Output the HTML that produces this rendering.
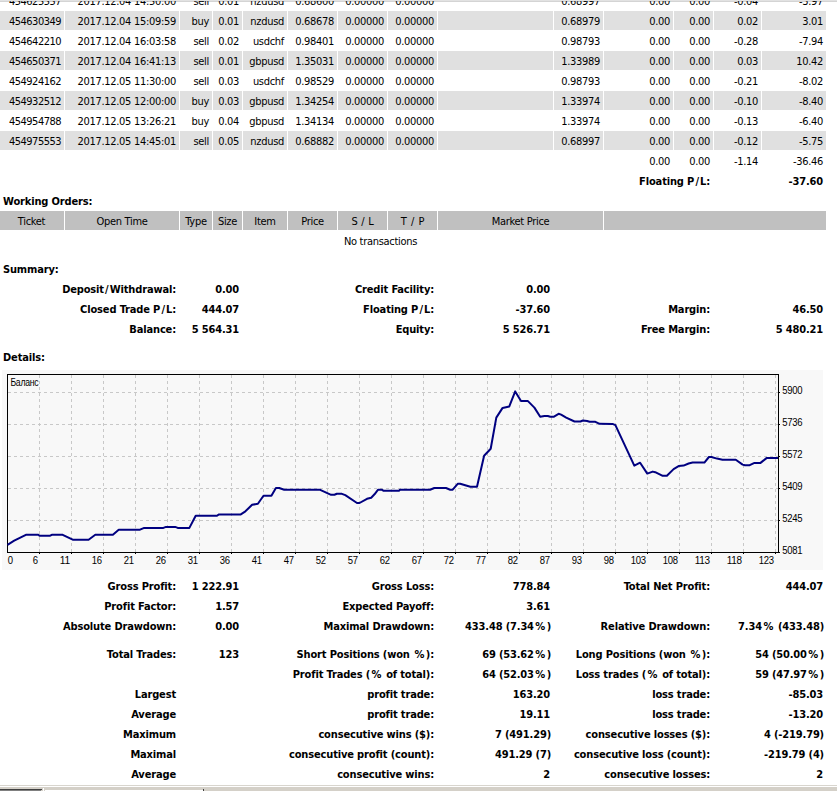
<!DOCTYPE html>
<html><head><meta charset="utf-8"><title>Statement</title>
<style>
html,body{margin:0;padding:0;background:#fff;overflow:hidden;}
#pg{position:relative;width:837px;height:791px;overflow:hidden;background:#fff;font-family:"DejaVu Sans Condensed","Liberation Sans",sans-serif;font-size:11px;line-height:13px;color:#000;letter-spacing:-0.3px;}
#pg div,#pg span{position:absolute;white-space:nowrap;}
.b{font-weight:bold;letter-spacing:-0.15px;}
i{font-style:normal}.t{letter-spacing:-0.52px}.w{word-spacing:1px}.w2{word-spacing:1.7px}.p{padding:0 1.5px}.s{padding:0 1.2px}
.g{background:#e0e0e0;height:19px;}
.h{background:#c0c0c0;height:19px;text-align:center;}
</style></head><body>
<div id="pg">
<div style="left:0;top:1px;width:837px;height:1px;background:#d4d4d4"></div>
<span style="right:776px;top:-5px"><i class="t">454625557</i></span><span style="right:661px;top:-5px">2017.12.04 14:50:00</span><span style="right:628px;top:-5px">sell</span><span style="right:598px;top:-5px">0.01</span><span style="right:553px;top:-5px">nzdusd</span><span style="right:503px;top:-5px">0.68600</span><span style="right:453px;top:-5px">0.00000</span><span style="right:403px;top:-5px">0.00000</span><span style="right:237px;top:-5px">0.68997</span><span style="right:167px;top:-5px">0.00</span><span style="right:127px;top:-5px">0.00</span><span style="right:79px;top:-5px">-0.04</span><span style="right:14px;top:-5px">-3.97</span>
<div class="g" style="left:-1px;top:11px;width:65px"></div><div class="g" style="left:65px;top:11px;width:114px"></div><div class="g" style="left:180px;top:11px;width:32px"></div><div class="g" style="left:213px;top:11px;width:29px"></div><div class="g" style="left:243px;top:11px;width:44px"></div><div class="g" style="left:288px;top:11px;width:49px"></div><div class="g" style="left:338px;top:11px;width:49px"></div><div class="g" style="left:388px;top:11px;width:49px"></div><div class="g" style="left:438px;top:11px;width:115px"></div><div class="g" style="left:554px;top:11px;width:49px"></div><div class="g" style="left:604px;top:11px;width:69px"></div><div class="g" style="left:674px;top:11px;width:39px"></div><div class="g" style="left:714px;top:11px;width:47px"></div><div class="g" style="left:762px;top:11px;width:64px"></div><span style="right:776px;top:15px"><i class="t">454630349</i></span><span style="right:661px;top:15px">2017.12.04 15:09:59</span><span style="right:628px;top:15px">buy</span><span style="right:598px;top:15px">0.01</span><span style="right:553px;top:15px">nzdusd</span><span style="right:503px;top:15px">0.68678</span><span style="right:453px;top:15px">0.00000</span><span style="right:403px;top:15px">0.00000</span><span style="right:237px;top:15px">0.68979</span><span style="right:167px;top:15px">0.00</span><span style="right:127px;top:15px">0.00</span><span style="right:79px;top:15px">0.02</span><span style="right:14px;top:15px">3.01</span>
<span style="right:776px;top:35px"><i class="t">454642210</i></span><span style="right:661px;top:35px">2017.12.04 16:03:58</span><span style="right:628px;top:35px">sell</span><span style="right:598px;top:35px">0.02</span><span style="right:553px;top:35px">usdchf</span><span style="right:503px;top:35px">0.98401</span><span style="right:453px;top:35px">0.00000</span><span style="right:403px;top:35px">0.00000</span><span style="right:237px;top:35px">0.98793</span><span style="right:167px;top:35px">0.00</span><span style="right:127px;top:35px">0.00</span><span style="right:79px;top:35px">-0.28</span><span style="right:14px;top:35px">-7.94</span>
<div class="g" style="left:-1px;top:51px;width:65px"></div><div class="g" style="left:65px;top:51px;width:114px"></div><div class="g" style="left:180px;top:51px;width:32px"></div><div class="g" style="left:213px;top:51px;width:29px"></div><div class="g" style="left:243px;top:51px;width:44px"></div><div class="g" style="left:288px;top:51px;width:49px"></div><div class="g" style="left:338px;top:51px;width:49px"></div><div class="g" style="left:388px;top:51px;width:49px"></div><div class="g" style="left:438px;top:51px;width:115px"></div><div class="g" style="left:554px;top:51px;width:49px"></div><div class="g" style="left:604px;top:51px;width:69px"></div><div class="g" style="left:674px;top:51px;width:39px"></div><div class="g" style="left:714px;top:51px;width:47px"></div><div class="g" style="left:762px;top:51px;width:64px"></div><span style="right:776px;top:55px"><i class="t">454650371</i></span><span style="right:661px;top:55px">2017.12.04 16:41:13</span><span style="right:628px;top:55px">sell</span><span style="right:598px;top:55px">0.01</span><span style="right:553px;top:55px">gbpusd</span><span style="right:503px;top:55px">1.35031</span><span style="right:453px;top:55px">0.00000</span><span style="right:403px;top:55px">0.00000</span><span style="right:237px;top:55px">1.33989</span><span style="right:167px;top:55px">0.00</span><span style="right:127px;top:55px">0.00</span><span style="right:79px;top:55px">0.03</span><span style="right:14px;top:55px">10.42</span>
<span style="right:776px;top:75px"><i class="t">454924162</i></span><span style="right:661px;top:75px">2017.12.05 11:30:00</span><span style="right:628px;top:75px">sell</span><span style="right:598px;top:75px">0.03</span><span style="right:553px;top:75px">usdchf</span><span style="right:503px;top:75px">0.98529</span><span style="right:453px;top:75px">0.00000</span><span style="right:403px;top:75px">0.00000</span><span style="right:237px;top:75px">0.98793</span><span style="right:167px;top:75px">0.00</span><span style="right:127px;top:75px">0.00</span><span style="right:79px;top:75px">-0.21</span><span style="right:14px;top:75px">-8.02</span>
<div class="g" style="left:-1px;top:91px;width:65px"></div><div class="g" style="left:65px;top:91px;width:114px"></div><div class="g" style="left:180px;top:91px;width:32px"></div><div class="g" style="left:213px;top:91px;width:29px"></div><div class="g" style="left:243px;top:91px;width:44px"></div><div class="g" style="left:288px;top:91px;width:49px"></div><div class="g" style="left:338px;top:91px;width:49px"></div><div class="g" style="left:388px;top:91px;width:49px"></div><div class="g" style="left:438px;top:91px;width:115px"></div><div class="g" style="left:554px;top:91px;width:49px"></div><div class="g" style="left:604px;top:91px;width:69px"></div><div class="g" style="left:674px;top:91px;width:39px"></div><div class="g" style="left:714px;top:91px;width:47px"></div><div class="g" style="left:762px;top:91px;width:64px"></div><span style="right:776px;top:95px"><i class="t">454932512</i></span><span style="right:661px;top:95px">2017.12.05 12:00:00</span><span style="right:628px;top:95px">buy</span><span style="right:598px;top:95px">0.03</span><span style="right:553px;top:95px">gbpusd</span><span style="right:503px;top:95px">1.34254</span><span style="right:453px;top:95px">0.00000</span><span style="right:403px;top:95px">0.00000</span><span style="right:237px;top:95px">1.33974</span><span style="right:167px;top:95px">0.00</span><span style="right:127px;top:95px">0.00</span><span style="right:79px;top:95px">-0.10</span><span style="right:14px;top:95px">-8.40</span>
<span style="right:776px;top:115px"><i class="t">454954788</i></span><span style="right:661px;top:115px">2017.12.05 13:26:21</span><span style="right:628px;top:115px">buy</span><span style="right:598px;top:115px">0.04</span><span style="right:553px;top:115px">gbpusd</span><span style="right:503px;top:115px">1.34134</span><span style="right:453px;top:115px">0.00000</span><span style="right:403px;top:115px">0.00000</span><span style="right:237px;top:115px">1.33974</span><span style="right:167px;top:115px">0.00</span><span style="right:127px;top:115px">0.00</span><span style="right:79px;top:115px">-0.13</span><span style="right:14px;top:115px">-6.40</span>
<div class="g" style="left:-1px;top:131px;width:65px"></div><div class="g" style="left:65px;top:131px;width:114px"></div><div class="g" style="left:180px;top:131px;width:32px"></div><div class="g" style="left:213px;top:131px;width:29px"></div><div class="g" style="left:243px;top:131px;width:44px"></div><div class="g" style="left:288px;top:131px;width:49px"></div><div class="g" style="left:338px;top:131px;width:49px"></div><div class="g" style="left:388px;top:131px;width:49px"></div><div class="g" style="left:438px;top:131px;width:115px"></div><div class="g" style="left:554px;top:131px;width:49px"></div><div class="g" style="left:604px;top:131px;width:69px"></div><div class="g" style="left:674px;top:131px;width:39px"></div><div class="g" style="left:714px;top:131px;width:47px"></div><div class="g" style="left:762px;top:131px;width:64px"></div><span style="right:776px;top:135px"><i class="t">454975553</i></span><span style="right:661px;top:135px">2017.12.05 14:45:01</span><span style="right:628px;top:135px">sell</span><span style="right:598px;top:135px">0.05</span><span style="right:553px;top:135px">nzdusd</span><span style="right:503px;top:135px">0.68882</span><span style="right:453px;top:135px">0.00000</span><span style="right:403px;top:135px">0.00000</span><span style="right:237px;top:135px">0.68997</span><span style="right:167px;top:135px">0.00</span><span style="right:127px;top:135px">0.00</span><span style="right:79px;top:135px">-0.12</span><span style="right:14px;top:135px">-5.75</span>
<span style="right:167px;top:155px">0.00</span><span style="right:127px;top:155px">0.00</span><span style="right:79px;top:155px">-1.14</span><span style="right:14px;top:155px">-36.46</span>
<div style="left:0;top:0;width:837px;height:1px;background:#e2e2e2"></div>
<span class="b" style="right:127px;top:175px">Floating P<i class="s">/</i>L:</span><span class="b" style="right:14px;top:175px">-37.60</span>
<span class="b" style="left:3px;top:195px">Working Orders:</span>
<div class="h" style="left:-1px;top:211px;width:65px"><span style="position:static;line-height:21px">Ticket</span></div><div class="h" style="left:65px;top:211px;width:114px"><span style="position:static;line-height:21px">Open Time</span></div><div class="h" style="left:180px;top:211px;width:32px"><span style="position:static;line-height:21px">Type</span></div><div class="h" style="left:213px;top:211px;width:29px"><span style="position:static;line-height:21px">Size</span></div><div class="h" style="left:243px;top:211px;width:44px"><span style="position:static;line-height:21px">Item</span></div><div class="h" style="left:288px;top:211px;width:49px"><span style="position:static;line-height:21px">Price</span></div><div class="h" style="left:338px;top:211px;width:49px"><span style="position:static;line-height:21px"><i class=w>S / L</i></span></div><div class="h" style="left:388px;top:211px;width:49px"><span style="position:static;line-height:21px"><i class=w2>T / P</i></span></div><div class="h" style="left:438px;top:211px;width:165px"><span style="position:static;line-height:21px">Market Price</span></div><div class="h" style="left:604px;top:211px;width:222px"><span style="position:static;line-height:21px"></span></div>
<span style="left:180.5px;top:235px;width:400px;text-align:center">No transactions</span>
<span class="b" style="left:3px;top:263px">Summary:</span>
<span class="b" style="right:661px;top:283px">Deposit<i class="s">/</i>Withdrawal:</span><span class="b" style="right:598px;top:283px">0.00</span><span class="b" style="right:403px;top:283px">Credit Facility:</span><span class="b" style="right:287px;top:283px">0.00</span>
<span class="b" style="right:661px;top:303px">Closed Trade P<i class="s">/</i>L:</span><span class="b" style="right:598px;top:303px">444.07</span><span class="b" style="right:403px;top:303px">Floating P<i class="s">/</i>L:</span><span class="b" style="right:287px;top:303px">-37.60</span><span class="b" style="right:127px;top:303px">Margin:</span><span class="b" style="right:14px;top:303px">46.50</span>
<span class="b" style="right:661px;top:323px">Balance:</span><span class="b" style="right:598px;top:323px">5 564.31</span><span class="b" style="right:403px;top:323px">Equity:</span><span class="b" style="right:287px;top:323px">5 526.71</span><span class="b" style="right:127px;top:323px">Free Margin:</span><span class="b" style="right:14px;top:323px">5 480.21</span>
<span class="b" style="left:3px;top:351px">Details:</span>
<svg width="821" height="200" viewBox="0 0 821 200" style="position:absolute;left:2px;top:370px" font-family="'Liberation Sans',sans-serif" font-size="10px" shape-rendering="crispEdges">
<rect x="0" y="0" width="821" height="200" fill="#f8f8f8"/>
<line x1="37.5" y1="5" x2="37.5" y2="182" stroke="#c8c8c8" stroke-width="1" stroke-dasharray="3 3"/>
<line x1="69.5" y1="5" x2="69.5" y2="182" stroke="#c8c8c8" stroke-width="1" stroke-dasharray="3 3"/>
<line x1="101.5" y1="5" x2="101.5" y2="182" stroke="#c8c8c8" stroke-width="1" stroke-dasharray="3 3"/>
<line x1="133.5" y1="5" x2="133.5" y2="182" stroke="#c8c8c8" stroke-width="1" stroke-dasharray="3 3"/>
<line x1="165.5" y1="5" x2="165.5" y2="182" stroke="#c8c8c8" stroke-width="1" stroke-dasharray="3 3"/>
<line x1="197.5" y1="5" x2="197.5" y2="182" stroke="#c8c8c8" stroke-width="1" stroke-dasharray="3 3"/>
<line x1="229.5" y1="5" x2="229.5" y2="182" stroke="#c8c8c8" stroke-width="1" stroke-dasharray="3 3"/>
<line x1="261.5" y1="5" x2="261.5" y2="182" stroke="#c8c8c8" stroke-width="1" stroke-dasharray="3 3"/>
<line x1="293.5" y1="5" x2="293.5" y2="182" stroke="#c8c8c8" stroke-width="1" stroke-dasharray="3 3"/>
<line x1="325.5" y1="5" x2="325.5" y2="182" stroke="#c8c8c8" stroke-width="1" stroke-dasharray="3 3"/>
<line x1="357.5" y1="5" x2="357.5" y2="182" stroke="#c8c8c8" stroke-width="1" stroke-dasharray="3 3"/>
<line x1="389.5" y1="5" x2="389.5" y2="182" stroke="#c8c8c8" stroke-width="1" stroke-dasharray="3 3"/>
<line x1="421.5" y1="5" x2="421.5" y2="182" stroke="#c8c8c8" stroke-width="1" stroke-dasharray="3 3"/>
<line x1="453.5" y1="5" x2="453.5" y2="182" stroke="#c8c8c8" stroke-width="1" stroke-dasharray="3 3"/>
<line x1="485.5" y1="5" x2="485.5" y2="182" stroke="#c8c8c8" stroke-width="1" stroke-dasharray="3 3"/>
<line x1="517.5" y1="5" x2="517.5" y2="182" stroke="#c8c8c8" stroke-width="1" stroke-dasharray="3 3"/>
<line x1="549.5" y1="5" x2="549.5" y2="182" stroke="#c8c8c8" stroke-width="1" stroke-dasharray="3 3"/>
<line x1="581.5" y1="5" x2="581.5" y2="182" stroke="#c8c8c8" stroke-width="1" stroke-dasharray="3 3"/>
<line x1="613.5" y1="5" x2="613.5" y2="182" stroke="#c8c8c8" stroke-width="1" stroke-dasharray="3 3"/>
<line x1="645.5" y1="5" x2="645.5" y2="182" stroke="#c8c8c8" stroke-width="1" stroke-dasharray="3 3"/>
<line x1="677.5" y1="5" x2="677.5" y2="182" stroke="#c8c8c8" stroke-width="1" stroke-dasharray="3 3"/>
<line x1="709.5" y1="5" x2="709.5" y2="182" stroke="#c8c8c8" stroke-width="1" stroke-dasharray="3 3"/>
<line x1="741.5" y1="5" x2="741.5" y2="182" stroke="#c8c8c8" stroke-width="1" stroke-dasharray="3 3"/>
<line x1="773.5" y1="5" x2="773.5" y2="182" stroke="#c8c8c8" stroke-width="1" stroke-dasharray="3 3"/>
<line x1="6" y1="22.5" x2="776" y2="22.5" stroke="#c8c8c8" stroke-width="1" stroke-dasharray="3 3"/>
<line x1="6" y1="54.5" x2="776" y2="54.5" stroke="#c8c8c8" stroke-width="1" stroke-dasharray="3 3"/>
<line x1="6" y1="86.5" x2="776" y2="86.5" stroke="#c8c8c8" stroke-width="1" stroke-dasharray="3 3"/>
<line x1="6" y1="118.5" x2="776" y2="118.5" stroke="#c8c8c8" stroke-width="1" stroke-dasharray="3 3"/>
<line x1="6" y1="150.5" x2="776" y2="150.5" stroke="#c8c8c8" stroke-width="1" stroke-dasharray="3 3"/>
<rect x="5.5" y="4.5" width="771" height="178" fill="none" stroke="#000" stroke-width="1"/>
<line x1="37.5" y1="183" x2="37.5" y2="184" stroke="#000"/>
<line x1="69.5" y1="183" x2="69.5" y2="184" stroke="#000"/>
<line x1="101.5" y1="183" x2="101.5" y2="184" stroke="#000"/>
<line x1="133.5" y1="183" x2="133.5" y2="184" stroke="#000"/>
<line x1="165.5" y1="183" x2="165.5" y2="184" stroke="#000"/>
<line x1="197.5" y1="183" x2="197.5" y2="184" stroke="#000"/>
<line x1="229.5" y1="183" x2="229.5" y2="184" stroke="#000"/>
<line x1="261.5" y1="183" x2="261.5" y2="184" stroke="#000"/>
<line x1="293.5" y1="183" x2="293.5" y2="184" stroke="#000"/>
<line x1="325.5" y1="183" x2="325.5" y2="184" stroke="#000"/>
<line x1="357.5" y1="183" x2="357.5" y2="184" stroke="#000"/>
<line x1="389.5" y1="183" x2="389.5" y2="184" stroke="#000"/>
<line x1="421.5" y1="183" x2="421.5" y2="184" stroke="#000"/>
<line x1="453.5" y1="183" x2="453.5" y2="184" stroke="#000"/>
<line x1="485.5" y1="183" x2="485.5" y2="184" stroke="#000"/>
<line x1="517.5" y1="183" x2="517.5" y2="184" stroke="#000"/>
<line x1="549.5" y1="183" x2="549.5" y2="184" stroke="#000"/>
<line x1="581.5" y1="183" x2="581.5" y2="184" stroke="#000"/>
<line x1="613.5" y1="183" x2="613.5" y2="184" stroke="#000"/>
<line x1="645.5" y1="183" x2="645.5" y2="184" stroke="#000"/>
<line x1="677.5" y1="183" x2="677.5" y2="184" stroke="#000"/>
<line x1="709.5" y1="183" x2="709.5" y2="184" stroke="#000"/>
<line x1="741.5" y1="183" x2="741.5" y2="184" stroke="#000"/>
<line x1="773.5" y1="183" x2="773.5" y2="184" stroke="#000"/>
<line x1="777" y1="22.5" x2="778" y2="22.5" stroke="#000"/>
<line x1="777" y1="54.5" x2="778" y2="54.5" stroke="#000"/>
<line x1="777" y1="86.5" x2="778" y2="86.5" stroke="#000"/>
<line x1="777" y1="118.5" x2="778" y2="118.5" stroke="#000"/>
<line x1="777" y1="150.5" x2="778" y2="150.5" stroke="#000"/>
<line x1="777" y1="182.5" x2="778" y2="182.5" stroke="#000"/>
<polyline fill="none" stroke="#000080" stroke-width="2" stroke-linejoin="round" shape-rendering="geometricPrecision" points="5.5,174.8 12.2,170.7 23.9,164.8 36.5,164.8 37.3,165.7 48.2,165.7 49.8,164.8 60.7,164.8 70.7,169.7 86.6,169.7 93.3,164.8 110.9,164.8 116.7,159.8 138.0,159.7 142.2,157.9 161.4,157.9 164.0,156.9 173.2,156.9 175.7,157.9 187.4,157.9 193.7,145.7 215.0,145.7 216.6,144.6 238.4,144.6 243.4,141.3 250.1,134.8 255.9,133.8 261.5,125.8 269.4,125.7 273.9,118.0 277.2,118.0 282.2,119.8 318.2,119.8 329.1,124.8 332.4,124.8 334.9,123.8 339.9,123.8 343.3,125.2 355.0,133.0 357.5,133.0 365.0,128.8 369.2,127.7 372.5,124.3 375.9,119.8 380.1,119.8 381.7,120.8 397.2,120.7 398.0,119.7 428.1,119.7 432.3,118.0 444.0,118.0 448.2,119.7 450.7,119.7 455.7,113.8 458.2,113.8 468.3,116.8 475.0,116.8 482.1,85.8 488.7,78.8 494.3,47.6 500.6,37.9 507.3,36.4 513.2,21.4 519.0,30.9 525.7,30.9 532.4,37.6 538.2,46.8 542.4,46.0 545.8,46.0 548.3,46.8 551.6,46.8 556.6,43.8 559.1,44.6 564.2,47.6 572.5,51.5 578.4,51.5 580.9,50.5 585.1,51.0 587.6,51.8 593.4,51.8 597.6,53.8 610.5,53.9 613.4,55.1 632.3,95.6 638.1,92.7 645.3,103.6 650.7,101.6 653.2,102.2 660.7,105.8 664.9,105.8 671.6,99.1 676.6,96.1 681.6,95.6 686.6,93.5 690.6,92.6 702.4,92.6 706.9,87.0 709.4,87.0 715.0,88.6 720.5,89.8 733.8,89.8 740.6,94.6 743.0,95.2 747.7,95.2 752.5,92.9 758.5,92.9 764.5,88.1 776.0,88.1"/>
<text x="5.7" y="194" textLength="5" lengthAdjust="spacingAndGlyphs">0</text>
<text x="30.8" y="194" textLength="5" lengthAdjust="spacingAndGlyphs">6</text>
<text x="57.8" y="194" textLength="10" lengthAdjust="spacingAndGlyphs">11</text>
<text x="89.8" y="194" textLength="10" lengthAdjust="spacingAndGlyphs">16</text>
<text x="121.8" y="194" textLength="10" lengthAdjust="spacingAndGlyphs">21</text>
<text x="153.8" y="194" textLength="10" lengthAdjust="spacingAndGlyphs">26</text>
<text x="185.8" y="194" textLength="10" lengthAdjust="spacingAndGlyphs">31</text>
<text x="217.8" y="194" textLength="10" lengthAdjust="spacingAndGlyphs">36</text>
<text x="249.8" y="194" textLength="10" lengthAdjust="spacingAndGlyphs">41</text>
<text x="281.8" y="194" textLength="10" lengthAdjust="spacingAndGlyphs">47</text>
<text x="313.8" y="194" textLength="10" lengthAdjust="spacingAndGlyphs">52</text>
<text x="345.8" y="194" textLength="10" lengthAdjust="spacingAndGlyphs">57</text>
<text x="377.8" y="194" textLength="10" lengthAdjust="spacingAndGlyphs">62</text>
<text x="409.8" y="194" textLength="10" lengthAdjust="spacingAndGlyphs">67</text>
<text x="441.8" y="194" textLength="10" lengthAdjust="spacingAndGlyphs">72</text>
<text x="473.8" y="194" textLength="10" lengthAdjust="spacingAndGlyphs">77</text>
<text x="505.8" y="194" textLength="10" lengthAdjust="spacingAndGlyphs">82</text>
<text x="537.8" y="194" textLength="10" lengthAdjust="spacingAndGlyphs">87</text>
<text x="569.8" y="194" textLength="10" lengthAdjust="spacingAndGlyphs">93</text>
<text x="601.8" y="194" textLength="10" lengthAdjust="spacingAndGlyphs">98</text>
<text x="628.8" y="194" textLength="15" lengthAdjust="spacingAndGlyphs">103</text>
<text x="660.8" y="194" textLength="15" lengthAdjust="spacingAndGlyphs">108</text>
<text x="692.8" y="194" textLength="15" lengthAdjust="spacingAndGlyphs">113</text>
<text x="724.8" y="194" textLength="15" lengthAdjust="spacingAndGlyphs">118</text>
<text x="756.8" y="194" textLength="15" lengthAdjust="spacingAndGlyphs">123</text>
<text x="780.3" y="24.0" textLength="20" lengthAdjust="spacingAndGlyphs">5900</text>
<text x="780.3" y="56.0" textLength="20" lengthAdjust="spacingAndGlyphs">5736</text>
<text x="780.3" y="88.0" textLength="20" lengthAdjust="spacingAndGlyphs">5572</text>
<text x="780.3" y="120.0" textLength="20" lengthAdjust="spacingAndGlyphs">5409</text>
<text x="780.3" y="152.0" textLength="20" lengthAdjust="spacingAndGlyphs">5245</text>
<text x="780.3" y="184.0" textLength="20" lengthAdjust="spacingAndGlyphs">5081</text>
<text x="8.4" y="16" textLength="28" lengthAdjust="spacingAndGlyphs">Баланс</text>
</svg>
<span class="b" style="right:661px;top:580px">Gross Profit:</span><span class="b" style="right:598px;top:580px">1 222.91</span><span class="b" style="right:403px;top:580px">Gross Loss:</span><span class="b" style="right:287px;top:580px">778.84</span><span class="b" style="right:127px;top:580px">Total Net Profit:</span><span class="b" style="right:14px;top:580px">444.07</span>
<span class="b" style="right:661px;top:600px">Profit Factor:</span><span class="b" style="right:598px;top:600px">1.57</span><span class="b" style="right:403px;top:600px">Expected Payoff:</span><span class="b" style="right:287px;top:600px">3.61</span>
<span class="b" style="right:661px;top:620px">Absolute Drawdown:</span><span class="b" style="right:598px;top:620px">0.00</span><span class="b" style="right:403px;top:620px">Maximal Drawdown:</span><span class="b" style="right:286px;top:620px">433.48 (7.34<i class="p">%</i>)</span><span class="b" style="right:127px;top:620px">Relative Drawdown:</span><span class="b" style="right:13px;top:620px">7.34<i class="p">%</i> (433.48)</span>
<span class="b" style="right:661px;top:648px">Total Trades:</span><span class="b" style="right:598px;top:648px">123</span><span class="b" style="right:403px;top:648px">Short Positions (won <i class="p">%</i>):</span><span class="b" style="right:286px;top:648px">69 (53.62<i class="p">%</i>)</span><span class="b" style="right:127px;top:648px">Long Positions (won <i class="p">%</i>):</span><span class="b" style="right:13px;top:648px">54 (50.00<i class="p">%</i>)</span>
<span class="b" style="right:403px;top:668px">Profit Trades (<i class="p">%</i> of total):</span><span class="b" style="right:286px;top:668px">64 (52.03<i class="p">%</i>)</span><span class="b" style="right:127px;top:668px">Loss trades (<i class="p">%</i> of total):</span><span class="b" style="right:13px;top:668px">59 (47.97<i class="p">%</i>)</span>
<span class="b" style="right:661px;top:688px">Largest</span><span class="b" style="right:403px;top:688px">profit trade:</span><span class="b" style="right:287px;top:688px">163.20</span><span class="b" style="right:127px;top:688px">loss trade:</span><span class="b" style="right:14px;top:688px">-85.03</span>
<span class="b" style="right:661px;top:708px">Average</span><span class="b" style="right:403px;top:708px">profit trade:</span><span class="b" style="right:287px;top:708px">19.11</span><span class="b" style="right:127px;top:708px">loss trade:</span><span class="b" style="right:14px;top:708px">-13.20</span>
<span class="b" style="right:661px;top:728px">Maximum</span><span class="b" style="right:403px;top:728px">consecutive wins ($):</span><span class="b" style="right:286px;top:728px">7 (491.29)</span><span class="b" style="right:127px;top:728px">consecutive losses ($):</span><span class="b" style="right:13px;top:728px">4 (-219.79)</span>
<span class="b" style="right:661px;top:748px">Maximal</span><span class="b" style="right:403px;top:748px">consecutive profit (count):</span><span class="b" style="right:286px;top:748px">491.29 (7)</span><span class="b" style="right:127px;top:748px">consecutive loss (count):</span><span class="b" style="right:13px;top:748px">-219.79 (4)</span>
<span class="b" style="right:661px;top:768px">Average</span><span class="b" style="right:403px;top:768px">consecutive wins:</span><span class="b" style="right:287px;top:768px">2</span><span class="b" style="right:127px;top:768px">consecutive losses:</span><span class="b" style="right:14px;top:768px">2</span>
<div style="left:0;top:785px;width:837px;height:1px;background:#d8d5ce"></div><div style="left:0;top:786px;width:837px;height:1px;background:#fff"></div><div style="left:0;top:787px;width:837px;height:4px;background:#d4d0c8"></div><div style="left:0;top:789px;width:42px;height:1px;background:#404040"></div><div style="left:0;top:790px;width:41px;height:1px;background:#808080"></div><div style="left:43px;top:788px;width:1px;height:3px;background:#fff"></div><div style="left:45px;top:790px;width:158px;height:1px;background:#fff"></div><div style="left:203px;top:789px;width:1px;height:2px;background:#404040"></div>
</div>
</body></html>
